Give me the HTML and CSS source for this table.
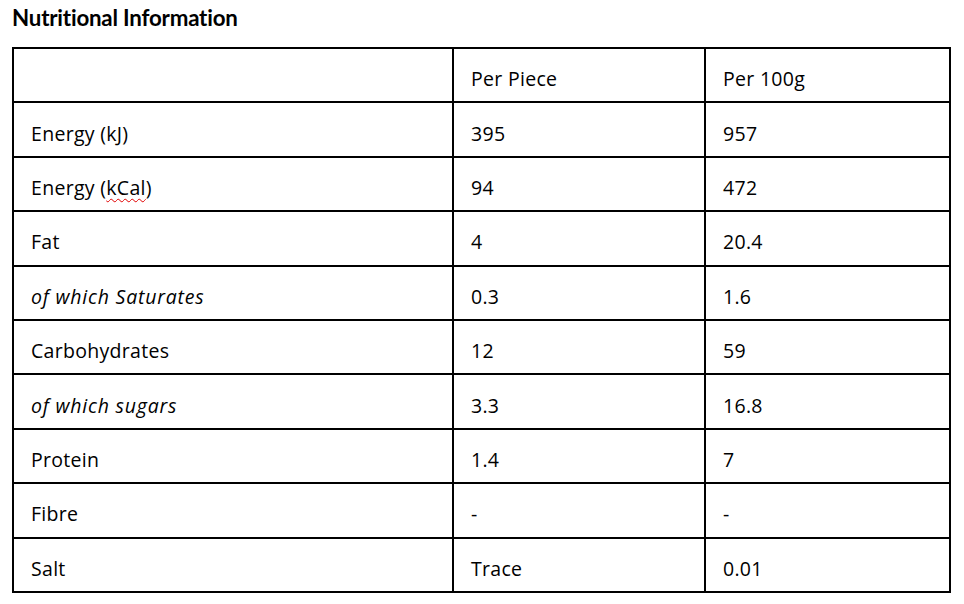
FILE: index.html
```html
<!DOCTYPE html>
<html>
<head>
<meta charset="utf-8">
<link rel="stylesheet" href="styles.css">
</head>
<body>
<h1 class="title">Nutritional Information</h1>
<table class="nutri">
  <colgroup>
    <col class="c1"><col class="c2"><col class="c3">
  </colgroup>
  <tr><td></td><td>Per Piece</td><td>Per 100g</td></tr>
  <tr><td>Energy (kJ)</td><td>395</td><td>957</td></tr>
  <tr><td>Energy (<span class="spell">kCal</span>)</td><td>94</td><td>472</td></tr>
  <tr><td>Fat</td><td>4</td><td>20.4</td></tr>
  <tr><td class="it">of which Saturates</td><td>0.3</td><td>1.6</td></tr>
  <tr><td>Carbohydrates</td><td>12</td><td>59</td></tr>
  <tr><td class="it">of which sugars</td><td>3.3</td><td>16.8</td></tr>
  <tr><td>Protein</td><td>1.4</td><td>7</td></tr>
  <tr><td>Fibre</td><td>-</td><td>-</td></tr>
  <tr><td>Salt</td><td>Trace</td><td>0.01</td></tr>
</table>
</body>
</html>
```
FILE: styles.css
```css
html, body {
  margin: 0;
  padding: 0;
  background: #fff;
}
body {
  font-family: "Open Sans", Lato, sans-serif;
  color: #000;
}
.title {
  margin: 0;
  padding: 5px 0 0 12px;
  height: 47px;
  box-sizing: border-box;
  font-family: Lato, sans-serif;
  font-size: 22.3px;
  font-weight: bold;
  line-height: 26px;
  letter-spacing: -0.2px;
}
.nutri {
  margin-left: 12px;
  border-collapse: collapse;
  table-layout: fixed;
  width: 937px;
}
.c1 { width: 440px; }
.c2 { width: 252px; }
.c3 { width: 245px; }
.nutri td {
  border: 2px solid #000;
  height: 54.4px;
  box-sizing: border-box;
  padding: 7px 0 0 17px;
  font-size: 19.5px;
  font-weight: 400;
  letter-spacing: 0.3px;
  color: #000;
  vertical-align: middle;
}
.nutri .it {
  font-style: italic;
  letter-spacing: 0.8px;
}
.spell {
  text-decoration: underline wavy #e00000;
  text-decoration-thickness: 1px;
  text-underline-offset: 3px;
}
```
